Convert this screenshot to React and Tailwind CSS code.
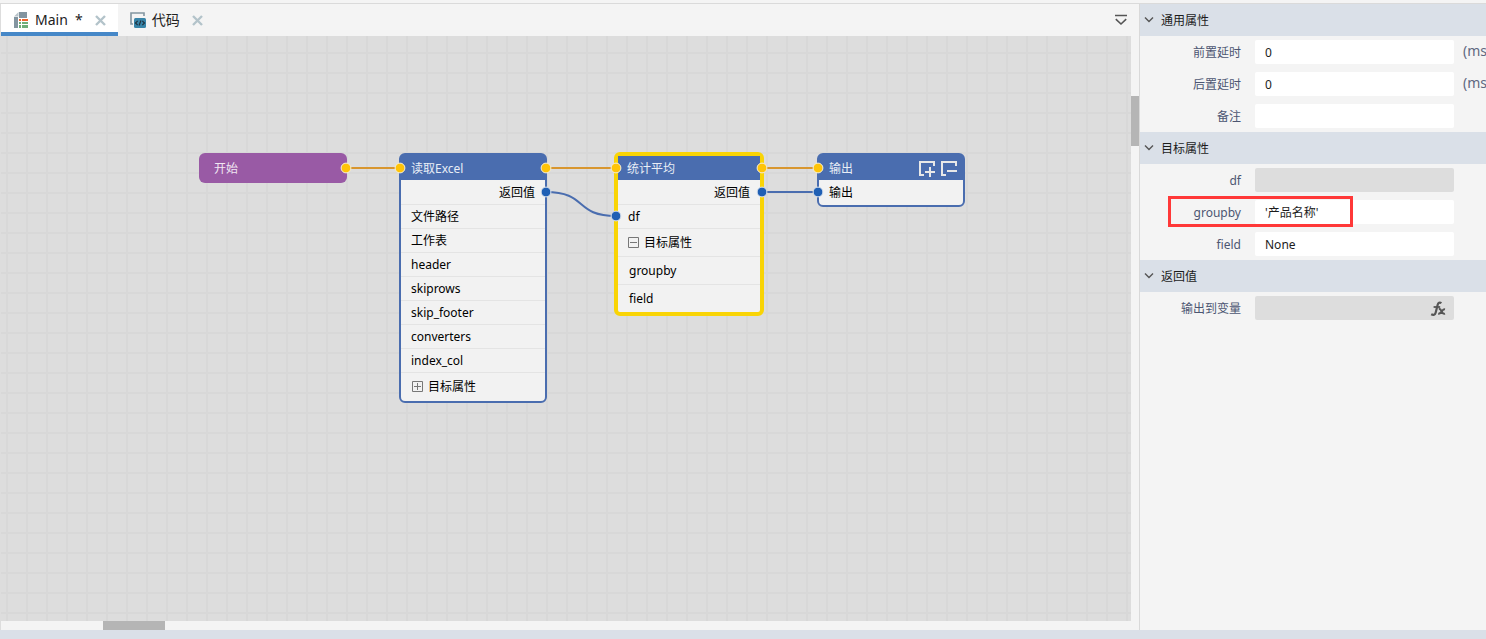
import React from 'react';

const FONT = "font-['Noto_Sans','Noto_Sans_CJK_SC',sans-serif]";

function MainIcon() {
  return (
    <svg className="w-4 h-4" viewBox="0 0 16 16" aria-hidden="true">
      <path d="M6 0h8v6H6z" fill="#8395a0" />
      <path d="M1 5h4v11H1z" fill="#8395a0" />
      <path d="M1 4.5 5.5 0v4.5z" fill="#b9c4ca" />
      <path d="M6 7h2v2H6zM9 7h6v2H9z" fill="#f0642d" />
      <path d="M6 10h2v2H6zM9 10h6v2H9zM6 13h2v3H6zM9 13h6v3H9z" fill="#6fae7a" />
    </svg>
  );
}

function CodeIcon() {
  return (
    <svg className="w-4 h-4" viewBox="0 0 16 16" fill="none" aria-hidden="true">
      <path d="M3 12H1V1h13v3" stroke="#8395a0" strokeWidth="1.6" />
      <rect x="4" y="6" width="12" height="10" rx="1.5" fill="#3784a8" />
      <path d="M7.7 8.8 5.5 11l2.2 2.2M12.3 8.8l2.2 2.2-2.2 2.2M10.9 8.5l-1.8 5" stroke="#1f323f" strokeWidth="1.2" />
    </svg>
  );
}

function CloseIcon() {
  return (
    <svg className="w-[11px] h-[11px]" viewBox="0 0 11 11" aria-hidden="true">
      <path d="M1 1l9 9M10 1l-9 9" stroke="#b3c3ca" strokeWidth="2.4" />
    </svg>
  );
}

function Tab({ icon: Icon, label, active = false }) {
  return (
    <div
      className={
        active
          ? 'flex items-center h-8 px-3 pt-1 border-b-4 border-[#4688c8] bg-white'
          : 'flex items-center h-8 px-3 pt-1 border-b-4 border-transparent'
      }
    >
      <button type="button" className="flex items-center gap-1.5 text-sm whitespace-pre text-[#222]">
        <Icon />
        {label}
      </button>
      <button type="button" aria-label="关闭" className="ml-3">
        <CloseIcon />
      </button>
    </div>
  );
}

function ToggleBox({ open }) {
  return (
    <svg className="w-[11px] h-[11px]" viewBox="0 0 11 11" fill="none" aria-hidden="true">
      <path d="M.5.5h10v10H.5zM2 5.5h7" stroke="#777" />
      {!open && <path d="M5.5 2v7" stroke="#777" />}
    </svg>
  );
}

function NodeRow({ children, align = 'left', first = false }) {
  return (
    <li
      className={[
        'flex items-center h-6 px-[10px]',
        align === 'right' ? 'justify-end' : '',
        first ? 'pt-0.5' : 'border-t border-[#e4e4e4]',
      ].join(' ')}
    >
      {children}
    </li>
  );
}

function TallRow({ children, className = 'px-[11px]' }) {
  return <li className={`flex items-center gap-[5px] h-7 border-t border-[#e4e4e4] ${className}`}>{children}</li>;
}

function Node({ title, className, actions, children }) {
  return (
    <section className={`absolute w-[148px] rounded-md border-2 border-[#4a6daf] bg-[#f2f2f2] pb-px ${className}`}>
      <header className="flex items-center justify-between h-[25px] px-[10px] pt-0.5 bg-[#4a6daf] text-[#e8edf6]">
        {title}
        {actions}
      </header>
      <ul>{children}</ul>
    </section>
  );
}

function OutputActions() {
  return (
    <span className="flex gap-1 -mr-[5px]">
      <button type="button" aria-label="添加输出">
        <svg className="w-[18px] h-[18px]" viewBox="0 0 18 18" fill="none" stroke="#e8e8e8" strokeWidth="2" aria-hidden="true">
          <path d="M16 6V2H2v13h4M12 7v10M7 12h10" />
        </svg>
      </button>
      <button type="button" aria-label="删除输出">
        <svg className="w-[18px] h-[18px]" viewBox="0 0 18 18" fill="none" stroke="#e8e8e8" strokeWidth="2" aria-hidden="true">
          <path d="M16 6V2H2v13h4M7 11h10" />
        </svg>
      </button>
    </span>
  );
}

const FLOW_PORTS = [[345, 132], [399, 132], [545, 132], [615, 132], [761, 132], [817, 132]];
const DATA_PORTS = [[545, 156], [615, 180], [761, 156], [817, 156]];

function Wires() {
  return (
    <svg className="absolute inset-0 w-full h-full pointer-events-none" fill="none" aria-hidden="true">
      <path d="M345 132h54M545 132h70M761 132h56" stroke="#d8962f" strokeWidth="2" />
      <path d="M545 156C587 156 573 180 615 180M761 156h56" stroke="#4a6daf" strokeWidth="2" />
      {FLOW_PORTS.map(([x, y]) => (
        <circle key={`${x}-${y}`} cx={x} cy={y} r="4.9" fill="#ffc408" stroke="#f5efdc" />
      ))}
      {DATA_PORTS.map(([x, y]) => (
        <circle key={`${x}-${y}`} cx={x} cy={y} r="4.9" fill="#1f5fb4" stroke="#dfe6ef" />
      ))}
    </svg>
  );
}

const READ_FIELDS = ['文件路径', '工作表', 'header', 'skiprows', 'skip_footer', 'converters', 'index_col'];

function Canvas() {
  return (
    <main className="relative flex-1 min-w-0 overflow-hidden bg-[#ddd] bg-[linear-gradient(to_right,#d8d8d8_2px,transparent_2px),linear-gradient(to_bottom,#d8d8d8_2px,transparent_2px)] bg-[size:20px_20px] bg-[position:5px_16px] text-xs text-black">
      <section className="absolute left-[198px] top-[117px] flex items-center w-[148px] h-[30px] px-[15px] pt-0.5 rounded-md bg-[#995aa5] text-[#f0e6f2]">
        开始
      </section>

      <Node title="读取Excel" className="left-[398px] top-[117px]">
        <NodeRow align="right" first>返回值</NodeRow>
        {READ_FIELDS.map((name) => (
          <NodeRow key={name}>{name}</NodeRow>
        ))}
        <TallRow>
          <ToggleBox open={false} />
          目标属性
        </TallRow>
      </Node>

      <section className="absolute left-[613px] top-[116px] w-[150px] rounded-md border-4 border-[#f9d405] bg-[#f2f2f2]">
        <header className="flex items-center h-6 pt-0.5 px-[9px] bg-[#4a6daf] text-[#e8edf6]">统计平均</header>
        <ul>
          <NodeRow align="right" first>返回值</NodeRow>
          <NodeRow>df</NodeRow>
          <TallRow className="px-[10px]">
            <ToggleBox open />
            目标属性
          </TallRow>
          <TallRow>groupby</TallRow>
          <TallRow>field</TallRow>
        </ul>
      </section>

      <Node title="输出" className="left-[816px] top-[117px]" actions={<OutputActions />}>
        <NodeRow first>输出</NodeRow>
      </Node>

      <Wires />
    </main>
  );
}

function FieldRow({ id, label, value = '', disabled = false, unit, marked = false, action }) {
  return (
    <div className="relative flex items-center h-6 whitespace-nowrap">
      <label htmlFor={id} className="w-[101px] shrink-0 pt-0.5 text-right text-[#4c5672]">{label}</label>
      <div className="relative ml-[14px] w-[199px] shrink-0">
        <input
          id={id}
          type="text"
          defaultValue={value}
          disabled={disabled}
          className="block w-full h-6 px-[10px] rounded-xs bg-white text-[#1c1c1c] outline-none disabled:bg-[#ddd]"
        />
        {action}
      </div>
      {unit && <span className="ml-[9px] pb-0.5 text-sm text-[#5f6880]">{unit}</span>}
      {marked && <div className="absolute left-[28px] -top-1 w-[185px] h-[31px] border-3 border-[#ff3838] pointer-events-none" />}
    </div>
  );
}

function PropertyGroup({ title, children }) {
  return (
    <section>
      <h2>
        <button type="button" className="flex items-center gap-[6px] w-full h-8 px-1 bg-[#dae0e8] text-[#1c1c1c]">
          <svg className="w-[10px] h-[10px] mr-px" viewBox="0 0 10 10" fill="none" aria-hidden="true">
            <path d="M1 2.5l4 4 4-4" stroke="#555" strokeWidth="1.4" />
          </svg>
          <span className="pt-0.5">{title}</span>
        </button>
      </h2>
      <div className="flex flex-col gap-2 py-1">{children}</div>
    </section>
  );
}

function FxButton() {
  return (
    <button type="button" aria-label="表达式" className="absolute right-2 top-[5px]">
      <svg className="w-4 h-4" viewBox="0 0 16 16" fill="none" stroke="#555" aria-hidden="true">
        <path d="M11.4 2.2C9.7 1 8.2 1.8 7.6 4L5.7 11.5C5.1 13.9 3.4 14.5 1.2 13.3" strokeWidth="2.2" />
        <path d="M3.6 6h6.6" strokeWidth="1.8" />
        <path d="M8.8 8.2c1.8-.6 2 .6 2.7 2.2s1.4 3 3.5 2.2M15 8.4c-1.8-.4-2.3.9-3.4 2.2s-1.6 2.4-3.4 2" strokeWidth="2" />
      </svg>
    </button>
  );
}

function PropertyPanel() {
  return (
    <aside className="w-[347px] shrink-0 overflow-hidden border-l border-[#d9d9d9] text-xs">
      <PropertyGroup title="通用属性">
        <FieldRow id="delay-before" label="前置延时" value="0" unit="(ms)" />
        <FieldRow id="delay-after" label="后置延时" value="0" unit="(ms)" />
        <FieldRow id="remark" label="备注" />
      </PropertyGroup>
      <PropertyGroup title="目标属性">
        <FieldRow id="df" label="df" disabled />
        <FieldRow id="groupby" label="groupby" value="'产品名称'" marked />
        <FieldRow id="field" label="field" value="None" />
      </PropertyGroup>
      <PropertyGroup title="返回值">
        <FieldRow id="output" label="输出到变量" disabled action={<FxButton />} />
      </PropertyGroup>
    </aside>
  );
}

export default function App() {
  return (
    <div className={`flex flex-col h-screen overflow-hidden bg-[#f4f4f4] pt-[3px] ${FONT}`}>
      <div className="flex flex-1 min-h-0 border-t border-[#dadada]">
        <div className="flex flex-col flex-1 min-w-0 border-l border-[#ddd]">
          <nav className="flex items-center h-8 shrink-0">
            <Tab icon={MainIcon} label="Main  *" active />
            <Tab icon={CodeIcon} label="代码" />
            <button type="button" aria-label="标签列表" className="ml-auto mr-3">
              <svg className="w-3 h-3" viewBox="0 0 12 12" fill="none" stroke="#555" strokeWidth="1.6" aria-hidden="true">
                <path d="M0 1.5h12M.8 5.2 6 10l5.2-4.8" />
              </svg>
            </button>
          </nav>
          <div className="flex flex-1 min-h-0">
            <Canvas />
            <div className="w-2 shrink-0">
              <div className="h-[50px] mt-[60px] bg-[#b5b5b5]" />
            </div>
          </div>
          <div className="h-[9px] shrink-0">
            <div className="w-[62px] h-full ml-[102px] bg-[#b5b5b5]" />
          </div>
        </div>
        <PropertyPanel />
      </div>
      <footer className="h-[9px] shrink-0 bg-[#dae0e8]" />
    </div>
  );
}
